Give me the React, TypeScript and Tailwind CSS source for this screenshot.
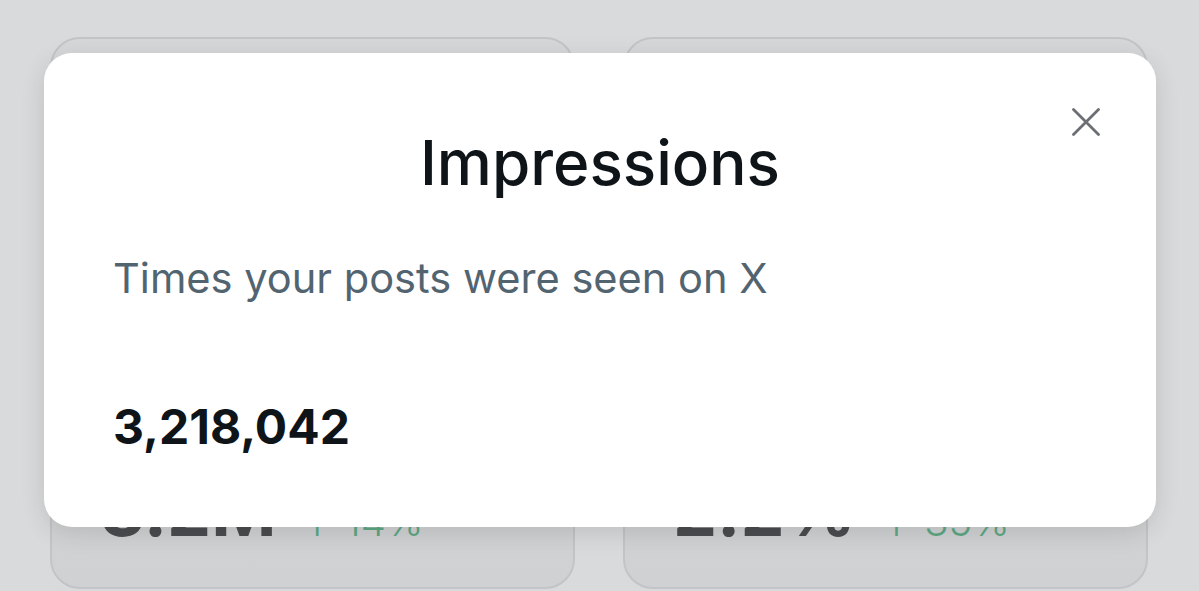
interface StatCardProps {
  value: string
  change: string
}

function StatCard({ value, change }: StatCardProps) {
  return (
    <div className="h-[552px] rounded-[30px] border-2 border-[#c3c4c7] bg-gradient-to-b from-[#d6d7d9] to-[#d0d1d3] flex flex-col justify-end px-[48px] pb-[41px]">
      <div className="flex items-baseline gap-[24px]">
        <span className="text-[70px] leading-none font-bold text-[#4b4c4f]">{value}</span>
        <span className="text-[40px] leading-none font-light text-[#5ea884]">↑ {change}</span>
      </div>
    </div>
  )
}

export default function App() {
  return (
    <div
      className="relative w-full h-[591px] overflow-hidden bg-[#d9dadc]"
      style={{ fontFamily: 'Inter, "Noto Sans", sans-serif' }}
    >
      {/* Stats behind the dialog */}
      <div className="grid grid-cols-2 gap-[48px] pl-[50px] pr-[51px] pt-[37px]">
        <StatCard value="3.2M" change="14%" />
        <StatCard value="2.2%" change="35%" />
      </div>

      {/* Dialog */}
      <div className="absolute left-[44px] top-[53px] w-[1112px] h-[474px] rounded-[28px] bg-white shadow-[0_6px_24px_rgba(0,0,0,0.12)]">
        <button className="absolute left-[1028px] top-[55px] text-[#6b6f74]">
          <svg width="28" height="28" viewBox="0 0 28 28" fill="none" stroke="currentColor" strokeWidth={2.8} strokeLinecap="round">
            <path d="M1.5 1.5l25 25M26.5 1.5l-25 25" />
          </svg>
        </button>

        <div className="px-[69px] pt-[79px]">
          <h2 className="text-center text-[62px] leading-none font-medium text-[#0f1419]">Impressions</h2>
          <p className="mt-[64px] text-[41.6px] leading-none text-[#536471]">Times your posts were seen on X</p>
          <p className="mt-[103px] text-[48px] leading-none font-bold text-[#0f1419]">3,218,042</p>
        </div>
      </div>
    </div>
  )
}
